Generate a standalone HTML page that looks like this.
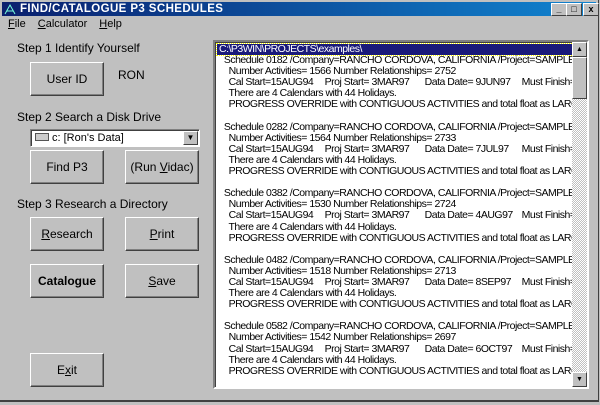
<!DOCTYPE html>
<html><head><style>
body{margin:0;width:600px;height:405px;overflow:hidden;background:#c0c0c0;font-family:"Liberation Sans",sans-serif;}
.win{position:absolute;left:0;top:0;width:598px;height:400px;background:#c0c0c0;border-right:1px solid #404040;border-bottom:2px solid #404040;}
.title{position:absolute;left:2px;top:2px;width:594px;height:14px;background:linear-gradient(90deg,#0a1f6e,#1084d0);color:#fff;font-weight:bold;font-size:11.5px;line-height:14px;}
.title span{position:absolute;left:18px;letter-spacing:0.4px}
.tb{position:absolute;top:3px;width:14px;height:11px;background:#c0c0c0;border:1px solid;border-color:#fff #404040 #404040 #fff;font-size:9px;line-height:11px;text-align:center;color:#000;font-weight:bold}
.menu{position:absolute;top:18px;left:8px;font-size:11px;color:#000}
.menu span{margin-right:12px}
.lbl{position:absolute;font-size:12px;color:#000}
.btn{position:absolute;width:72px;height:32px;border:1px solid;border-color:#fff #404040 #404040 #fff;box-shadow:inset -1px -1px #808080;font-size:12px;text-align:center;line-height:32px;color:#000}
.list{position:absolute;left:213px;top:40px;width:372px;height:345px;background:#fff;border:2px solid;border-color:#808080 #fff #fff #808080;box-shadow:inset 1px 1px #404040;overflow:hidden}
.sb{position:absolute;right:0;top:0;width:15px;height:345px;background:repeating-conic-gradient(#c0c0c0 0 25%,#fff 0 50%) 0 0/2px 2px}
.sbb{position:absolute;left:0;width:13px;height:13px;background:#c0c0c0;border:1px solid;border-color:#fff #404040 #404040 #fff;font-size:7px;line-height:13px;text-align:center}
.txt{position:absolute;left:4px;top:2px;font-size:10.5px;line-height:11.1px;white-space:pre;color:#000;letter-spacing:-0.5px}
.hl{background:#1a1a7a;color:#fff;display:inline-block;width:354px;margin-left:-2px;padding-left:2px;outline:1px dotted #ff0}
.a{display:inline-block;width:96px}.b{display:inline-block;width:100px}.c{display:inline-block;width:97px}
</style></head><body>
<div class="win">
<div class="title"><span>FIND/CATALOGUE P3 SCHEDULES</span><svg style="position:absolute;left:2px;top:1px" width="13" height="12"><path d="M1 11L6 2L11 11M3 8h6" stroke="#7fd" fill="none"/></svg></div>
<div class="tb" style="left:551px">_</div><div class="tb" style="left:566px">□</div><div class="tb" style="left:583px">x</div>
<div class="menu"><span><u>F</u>ile</span><span><u>C</u>alculator</span><span><u>H</u>elp</span></div>
<div class="lbl" style="left:17px;top:41px">Step 1 Identify Yourself</div>
<div class="btn" style="left:30px;top:62px">User ID</div>
<div class="lbl" style="left:118px;top:68px">RON</div>
<div class="lbl" style="left:17px;top:110px">Step 2 Search a Disk Drive</div>
<div style="position:absolute;left:30px;top:129px;width:168px;height:16px;background:#fff;border:1px solid;border-color:#808080 #fff #fff #808080;box-shadow:inset 1px 1px #404040;font-size:11px;line-height:16px">
<span style="display:inline-block;width:12px;height:6px;border:1px solid #555;background:#ccc;margin:0 3px 0 4px"></span>c: [Ron's Data]
<div style="position:absolute;right:1px;top:1px;width:13px;height:12px;background:#c0c0c0;border:1px solid;border-color:#fff #404040 #404040 #fff;font-size:8px;line-height:12px;text-align:center">▼</div></div>
<div class="btn" style="left:30px;top:150px">Find P3</div>
<div class="btn" style="left:125px;top:150px">(Run <u>V</u>idac)</div>
<div class="lbl" style="left:17px;top:197px">Step 3 Research a Directory</div>
<div class="btn" style="left:30px;top:217px"><u>R</u>esearch</div>
<div class="btn" style="left:125px;top:217px"><u>P</u>rint</div>
<div class="btn" style="left:30px;top:264px;font-weight:bold">Catalogue</div>
<div class="btn" style="left:125px;top:264px"><u>S</u>ave</div>
<div class="btn" style="left:30px;top:353px">E<u>x</u>it</div>
<div class="list">
<div class="txt"><span class="hl">C:\P3WIN\PROJECTS\examples\</span>
  Schedule 0182 /Company=RANCHO CORDOVA, CALIFORNIA /Project=SAMPLE HOSPITAL
    Number Activities= 1566 Number Relationships= 2752
    <span class="a">Cal Start=15AUG94</span><span class="b">Proj Start= 3MAR97</span><span class="c">Data Date= 9JUN97</span>Must Finish=
    There are 4 Calendars with 44 Holidays.
    PROGRESS OVERRIDE with CONTIGUOUS ACTIVITIES and total float as LARGEST

  Schedule 0282 /Company=RANCHO CORDOVA, CALIFORNIA /Project=SAMPLE HOSPITAL
    Number Activities= 1564 Number Relationships= 2733
    <span class="a">Cal Start=15AUG94</span><span class="b">Proj Start= 3MAR97</span><span class="c">Data Date= 7JUL97</span>Must Finish=
    There are 4 Calendars with 44 Holidays.
    PROGRESS OVERRIDE with CONTIGUOUS ACTIVITIES and total float as LARGEST

  Schedule 0382 /Company=RANCHO CORDOVA, CALIFORNIA /Project=SAMPLE HOSPITAL
    Number Activities= 1530 Number Relationships= 2724
    <span class="a">Cal Start=15AUG94</span><span class="b">Proj Start= 3MAR97</span><span class="c">Data Date= 4AUG97</span>Must Finish=
    There are 4 Calendars with 44 Holidays.
    PROGRESS OVERRIDE with CONTIGUOUS ACTIVITIES and total float as LARGEST

  Schedule 0482 /Company=RANCHO CORDOVA, CALIFORNIA /Project=SAMPLE HOSPITAL
    Number Activities= 1518 Number Relationships= 2713
    <span class="a">Cal Start=15AUG94</span><span class="b">Proj Start= 3MAR97</span><span class="c">Data Date= 8SEP97</span>Must Finish=
    There are 4 Calendars with 44 Holidays.
    PROGRESS OVERRIDE with CONTIGUOUS ACTIVITIES and total float as LARGEST

  Schedule 0582 /Company=RANCHO CORDOVA, CALIFORNIA /Project=SAMPLE HOSPITAL
    Number Activities= 1542 Number Relationships= 2697
    <span class="a">Cal Start=15AUG94</span><span class="b">Proj Start= 3MAR97</span><span class="c">Data Date= 6OCT97</span>Must Finish=
    There are 4 Calendars with 44 Holidays.
    PROGRESS OVERRIDE with CONTIGUOUS ACTIVITIES and total float as LARGEST</div>
<div class="sb">
<div class="sbb" style="top:0">▲</div>
<div class="sbb" style="top:15px;height:40px"></div>
<div class="sbb" style="bottom:0">▼</div>
</div>
</div>
</div>
</body></html>
